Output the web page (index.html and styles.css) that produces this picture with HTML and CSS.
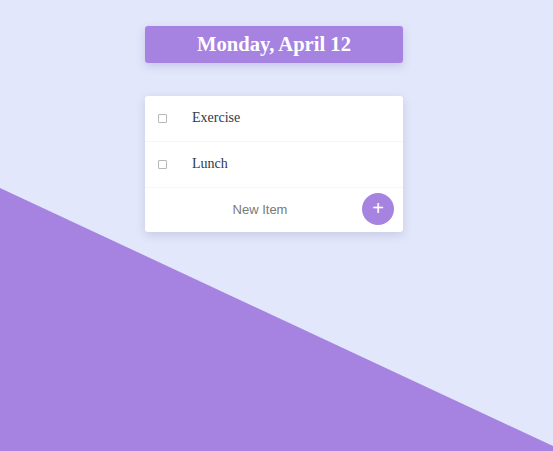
FILE: index.html
```html
<!DOCTYPE html>
<html>
<head>
<meta charset="utf-8">
<link rel="stylesheet" href="styles.css">
</head>
<body>
<div class="bg-shape"></div>
<main class="app">
  <h1 class="date">Monday, April 12</h1>
  <section class="card">
    <div class="row">
      <span class="check"></span>
      <span class="label">Exercise</span>
    </div>
    <div class="row">
      <span class="check"></span>
      <span class="label">Lunch</span>
    </div>
    <div class="row new">
      <span class="placeholder">New Item</span>
      <button class="add">+</button>
    </div>
  </section>
</main>
</body>
</html>
```

FILE: styles.css
```css
html, body {
  margin: 0;
  padding: 0;
  height: 100%;
}
body {
  background: #e2e7fb;
  font-family: "Liberation Serif", "Times New Roman", serif;
  overflow: hidden;
  position: relative;
  padding-right: 5px;
  box-sizing: border-box;
}
.bg-shape {
  position: absolute;
  inset: 0;
  background: #a683e1;
  clip-path: polygon(0 188px, 553px 446px, 553px 100%, 0 100%);
  z-index: 0;
}
.app {
  position: relative;
  z-index: 1;
  width: 258px;
  margin: 0 auto;
  padding-top: 26px;
  display: flex;
  flex-direction: column;
  gap: 33px;
}
.date {
  margin: 0;
  height: 37px;
  line-height: 36px;
  background: #a683e1;
  color: #fff;
  text-align: center;
  font-size: 20.6px;
  font-weight: bold;
  border-radius: 3px;
  box-shadow: 0 3px 8px rgba(120, 100, 180, 0.25);
}
.card {
  background: #fff;
  border-radius: 3px;
  box-shadow: 0 3px 10px rgba(100, 100, 150, 0.22);
}
.row {
  height: 45px;
  display: flex;
  align-items: center;
  border-bottom: 1px solid #f6f6f9;
  padding-left: 13px;
}
.row.new {
  border-bottom: none;
  padding-left: 0;
  padding-right: 9px;
  height: 44px;
}
.check {
  width: 7px;
  height: 7px;
  border: 1px solid #b8b8b8;
  border-radius: 1px;
}
.label {
  margin-left: 25px;
  font-size: 14px;
  color: #2f3a4a;
  margin-top: -2px;
}
.placeholder {
  flex: 1;
  text-align: center;
  font-family: "Liberation Sans", Arial, sans-serif;
  font-size: 13px;
  color: #7a7a7a;
  padding-left: 13px;
  margin-top: -2px;
}
.add {
  width: 32px;
  height: 32px;
  border-radius: 50%;
  border: none;
  background: #a683e1;
  color: #fff;
  font-family: "Liberation Sans", Arial, sans-serif;
  font-size: 20px;
  line-height: 30px;
  padding: 0 0 2px;
  margin-top: -2px;
  display: flex;
  align-items: center;
  justify-content: center;
}
```
